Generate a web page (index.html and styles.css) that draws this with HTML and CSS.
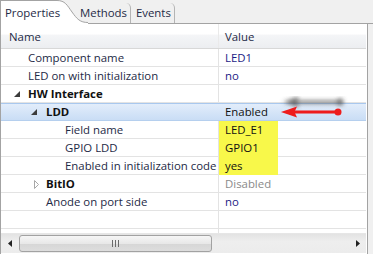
FILE: index.html
```html
<!DOCTYPE html>
<html lang="en">
<head>
  <meta charset="UTF-8">
  <title>Properties</title>
  <link rel="stylesheet" href="styles.css">
</head>
<body>

  <div class="tabs">
    <div class="tab tab-active">
      <span class="tab-label">Properties</span>
      <svg class="tab-curve" width="31" height="24" viewBox="0 0 31 24">
        <path d="M0,0.5 C8,0.5 10,5 15,12 C20,19 23,22.5 31,22.5 L31,24 L0,24 Z" fill="#fff"/>
        <path d="M0,0.5 C8,0.5 10,5 15,12 C20,19 23,22.5 31,22.5" fill="none" stroke="#a3a3a3"/>
      </svg>
    </div>
    <div class="tab tab-methods">Methods</div>
    <div class="tab tab-events">Events</div>
  </div>

  <div class="panel">
    <div class="grid">
      <div class="row head">
        <div class="cell name">Name</div>
        <div class="cell value">Value</div>
      </div>

      <div class="row">
        <div class="cell name lvl0">Component name</div>
        <div class="cell value">LED1</div>
      </div>
      <div class="row">
        <div class="cell name lvl0">LED on with initialization</div>
        <div class="cell value">no</div>
      </div>
      <div class="row group">
        <div class="cell name lvl0">
          <svg class="exp exp-hw" width="6" height="6" viewBox="0 0 6 6"><polygon points="6,0 6,6 0,6" fill="#3c3c3c"/></svg>HW Interface
        </div>
        <div class="cell value"></div>
      </div>
      <div class="row group selected">
        <div class="cell name lvl1">
          <svg class="exp exp-ldd" width="6" height="6" viewBox="0 0 6 6"><polygon points="6,0 6,6 0,6" fill="#3c3c3c"/></svg>LDD
        </div>
        <div class="cell value plain">Enabled</div>
      </div>
      <div class="row">
        <div class="cell name lvl2">Field name</div>
        <div class="cell value"><span class="hl">LED_E1</span></div>
      </div>
      <div class="row">
        <div class="cell name lvl2">GPIO LDD</div>
        <div class="cell value"><span class="hl">GPIO1</span></div>
      </div>
      <div class="row">
        <div class="cell name lvl2">Enabled in initialization code</div>
        <div class="cell value"><span class="hl">yes</span></div>
      </div>
      <div class="row group">
        <div class="cell name lvl1">
          <svg class="exp exp-bit" width="5" height="9" viewBox="0 0 5 9"><polygon points="0.5,0.5 4.5,4.5 0.5,8.5" fill="none" stroke="#a8a8a8"/></svg>BitIO
        </div>
        <div class="cell value disabled">Disabled</div>
      </div>
      <div class="row">
        <div class="cell name lvl1">Anode on port side</div>
        <div class="cell value">no</div>
      </div>
      <div class="row">
        <div class="cell name"></div>
        <div class="cell value"></div>
      </div>
      <div class="row filler">
        <div class="cell name"></div>
        <div class="cell value"></div>
      </div>
    </div>

    <div class="hscroll">
      <div class="scroll-btn">
        <svg width="4" height="7" viewBox="0 0 4 7"><polygon points="4,0 4,7 0,3.5" fill="#222"/></svg>
      </div>
      <div class="thumb">
        <svg width="7" height="7" viewBox="0 0 7 7">
          <path d="M0.5,0 V7 M3.5,0 V7 M6.5,0 V7" stroke="#6a6a6a"/>
        </svg>
      </div>
      <div class="track"></div>
      <div class="scroll-btn">
        <svg width="4" height="7" viewBox="0 0 4 7"><polygon points="0,0 0,7 4,3.5" fill="#222"/></svg>
      </div>
    </div>
  </div>

  <!-- callout arrow pointing at the LDD value -->
  <svg class="callout" width="72" height="30" viewBox="0 0 72 30">
    <defs>
      <filter id="shade" x="-20%" y="-200%" width="140%" height="400%">
        <feGaussianBlur in="SourceAlpha" stdDeviation="2"/>
        <feOffset dx="2" dy="-10" result="off"/>
        <feFlood flood-color="#4a4a4a" flood-opacity="0.8"/>
        <feComposite in2="off" operator="in"/>
        <feMerge>
          <feMergeNode/>
          <feMergeNode in="SourceGraphic"/>
        </feMerge>
      </filter>
    </defs>
    <g filter="url(#shade)">
      <path d="M16,16 H60" stroke="#ee1b1b" stroke-width="3"/>
      <polygon points="3,16 19,10.5 16.5,16 19,21.5" fill="#ee1b1b"/>
      <circle cx="60" cy="16" r="3.5" fill="#ee1b1b"/>
    </g>
  </svg>

</body>
</html>
```

FILE: styles.css
```css
body {
  margin: 0;
  width: 373px;
  height: 254px;
  overflow: hidden;
  background-color: #f0f0f0;
  font-family: "Open Sans", "Noto Sans", sans-serif;
  font-size: 11.4px;
  color: #1e2a46;
}

/* tab strip */
.tabs {
  display: flex;
  align-items: flex-end;
  height: 23px;
  border-bottom: 1px solid #a3a3a3;
}

.tab {
  height: 20px;
  line-height: 19px;
  color: #1e2a46;
}

.tab-active {
  display: flex;
  height: 24px;
  margin-bottom: -1px;
}

.tab-active .tab-label {
  position: relative;
  width: 52px;
  padding-left: 4px;
  line-height: 24px;
  white-space: nowrap;
  background-color: #fff;
  border-top: 1px solid #a3a3a3;
  border-left: 1px solid #a3a3a3;
}

.tab-curve {
  display: block;
}

.tab-methods {
  margin-left: -8px;
  padding: 0 3px 0 0;
  border-right: 1px solid #b4b4b4;
  border-top-right-radius: 5px;
}

.tab-events {
  padding: 0 3px 0 5px;
  border-right: 1px solid #b4b4b4;
  border-top-right-radius: 5px;
}

/* property table */
.panel {
  width: 368px;
  height: 230px;
  box-sizing: border-box;
  border-left: 1px solid #a3a3a3;
  border-right: 1px solid #a3a3a3;
  background-color: #fff;
}

.grid {
  width: 365px;
}

.row {
  display: grid;
  grid-template-columns: 218px 147px;
  height: 18px;
  box-sizing: border-box;
  border-bottom: 1px solid #e3e3e3;
  line-height: 17px;
}

.cell {
  box-sizing: border-box;
  white-space: nowrap;
  overflow: hidden;
}

.cell.name {
  border-right: 1px solid #e3e3e3;
}

.cell.value {
  padding-left: 6px;
  color: #1c1c86;
  overflow: visible;
}

.row.head {
  height: 25px;
  border-bottom-color: #d8d8d8;
  background: linear-gradient(#ffffff 0%, #ffffff 42%, #f4f5f7 46%, #eceef1 100%);
}

.row.head .cell {
  padding-top: 4px;
  color: #1e2a46;
}

.row.head .cell.name {
  padding-left: 8px;
  border-right-color: #eaeaea;
}

.lvl0 { padding-left: 27px; }
.lvl1 { padding-left: 45px; }
.lvl2 { padding-left: 64px; }

.row.group .cell.name {
  font-weight: bold;
  color: #111;
}

.exp {
  margin-bottom: 1px;
}

.exp-hw {
  margin-left: -14px;
  margin-right: 8px;
}

.exp-ldd {
  margin-left: -15px;
  margin-right: 9px;
}

.exp-bit {
  margin-left: -12px;
  margin-right: 7px;
  margin-bottom: 0;
  vertical-align: -1px;
}

.row.selected {
  background: linear-gradient(#e4eefb, #c9ddf5);
  border-bottom-color: #b5cfee;
  box-shadow: inset 0 1px #a9c8ee;
}

.row.selected .cell.name {
  border-right: none;
}

.cell.value.plain {
  color: #111;
}

.cell.value.disabled {
  color: #8a8a8a;
}

.hl {
  display: block;
  width: 59px;
  height: 18px;
  margin-left: -6px;
  padding-left: 6px;
  box-sizing: border-box;
  background-color: #f8f84a;
  color: #111;
}

.row.filler {
  height: 4px;
  border-bottom: none;
}

/* horizontal scrollbar */
.hscroll {
  display: flex;
  align-items: center;
  width: 365px;
  height: 20px;
  background: linear-gradient(#e3e3e3, #eeeeee 40%, #ececec);
  border-top: 1px solid #e6e6e6;
  box-sizing: border-box;
}

.scroll-btn {
  display: flex;
  align-items: center;
  justify-content: center;
  width: 17px;
  height: 18px;
}

.thumb {
  display: flex;
  align-items: center;
  justify-content: center;
  width: 193px;
  height: 17px;
  margin-left: 1px;
  box-sizing: border-box;
  border: 1px solid #a2a2a2;
  border-radius: 3px;
  background: linear-gradient(#f6f6f6, #e8e8e8 50%, #d6d6d6 51%, #dddddd);
}

.track {
  flex: 1;
}

.callout {
  position: absolute;
  left: 278px;
  top: 96px;
}
```
